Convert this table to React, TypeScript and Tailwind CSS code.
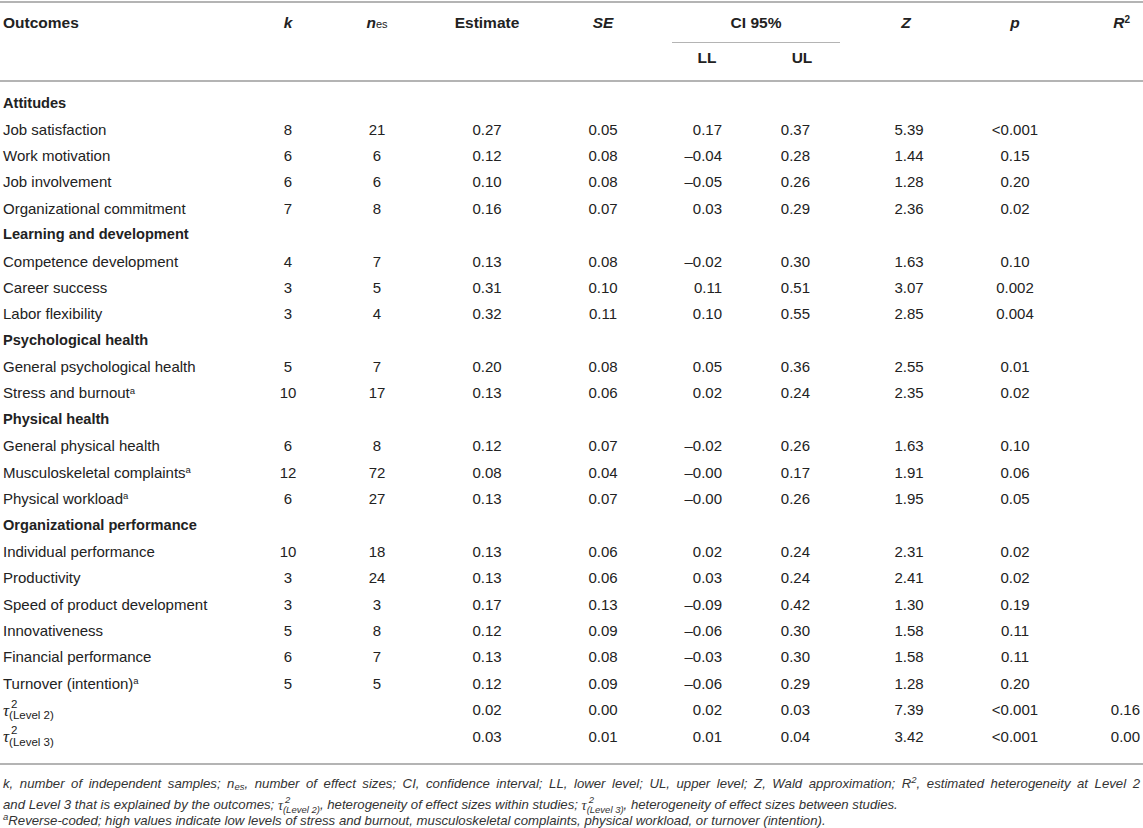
import React from "react";

type Row =
  | { kind: "group"; label: string }
  | { kind: "data"; label: string; sup?: boolean; v: string[] }
  | { kind: "tau"; level: string; v: string[] };

const rows: Row[] = [
  { kind: "group", label: "Attitudes" },
  { kind: "data", label: "Job satisfaction", v: ["8", "21", "0.27", "0.05", "0.17", "0.37", "5.39", "<0.001", ""] },
  { kind: "data", label: "Work motivation", v: ["6", "6", "0.12", "0.08", "–0.04", "0.28", "1.44", "0.15", ""] },
  { kind: "data", label: "Job involvement", v: ["6", "6", "0.10", "0.08", "–0.05", "0.26", "1.28", "0.20", ""] },
  { kind: "data", label: "Organizational commitment", v: ["7", "8", "0.16", "0.07", "0.03", "0.29", "2.36", "0.02", ""] },
  { kind: "group", label: "Learning and development" },
  { kind: "data", label: "Competence development", v: ["4", "7", "0.13", "0.08", "–0.02", "0.30", "1.63", "0.10", ""] },
  { kind: "data", label: "Career success", v: ["3", "5", "0.31", "0.10", "0.11", "0.51", "3.07", "0.002", ""] },
  { kind: "data", label: "Labor flexibility", v: ["3", "4", "0.32", "0.11", "0.10", "0.55", "2.85", "0.004", ""] },
  { kind: "group", label: "Psychological health" },
  { kind: "data", label: "General psychological health", v: ["5", "7", "0.20", "0.08", "0.05", "0.36", "2.55", "0.01", ""] },
  { kind: "data", label: "Stress and burnout", sup: true, v: ["10", "17", "0.13", "0.06", "0.02", "0.24", "2.35", "0.02", ""] },
  { kind: "group", label: "Physical health" },
  { kind: "data", label: "General physical health", v: ["6", "8", "0.12", "0.07", "–0.02", "0.26", "1.63", "0.10", ""] },
  { kind: "data", label: "Musculoskeletal complaints", sup: true, v: ["12", "72", "0.08", "0.04", "–0.00", "0.17", "1.91", "0.06", ""] },
  { kind: "data", label: "Physical workload", sup: true, v: ["6", "27", "0.13", "0.07", "–0.00", "0.26", "1.95", "0.05", ""] },
  { kind: "group", label: "Organizational performance" },
  { kind: "data", label: "Individual performance", v: ["10", "18", "0.13", "0.06", "0.02", "0.24", "2.31", "0.02", ""] },
  { kind: "data", label: "Productivity", v: ["3", "24", "0.13", "0.06", "0.03", "0.24", "2.41", "0.02", ""] },
  { kind: "data", label: "Speed of product development", v: ["3", "3", "0.17", "0.13", "–0.09", "0.42", "1.30", "0.19", ""] },
  { kind: "data", label: "Innovativeness", v: ["5", "8", "0.12", "0.09", "–0.06", "0.30", "1.58", "0.11", ""] },
  { kind: "data", label: "Financial performance", v: ["6", "7", "0.13", "0.08", "–0.03", "0.30", "1.58", "0.11", ""] },
  { kind: "data", label: "Turnover (intention)", sup: true, v: ["5", "5", "0.12", "0.09", "–0.06", "0.29", "1.28", "0.20", ""] },
  { kind: "tau", level: "(Level 2)", v: ["", "", "0.02", "0.00", "0.02", "0.03", "7.39", "<0.001", "0.16"] },
  { kind: "tau", level: "(Level 3)", v: ["", "", "0.03", "0.01", "0.01", "0.04", "3.42", "<0.001", "0.00"] },
];

// alignment for the 9 value columns
const cellCls = [
  "text-center",
  "text-center",
  "text-center",
  "text-center",
  "text-right pr-[32px]",
  "text-right pr-[40px]",
  "text-center pl-[6px]",
  "text-center",
  "text-right pr-[3px]",
];

const Tau = ({ level, small }: { level: string; small?: boolean }) => (
  <span className="inline-flex items-center align-middle">
    <span className={`italic font-['Liberation_Serif',serif] ${small ? "text-[14px]" : "text-[17px]"}`}>τ</span>
    <span
      className={`inline-flex flex-col leading-none ${small ? "text-[9.5px] italic -my-[5px] -translate-y-[1px]" : "text-[11.5px] not-italic"}`}
    >
      <span className="pl-[2px]">2</span>
      <span>{level}</span>
    </span>
  </span>
);

export default function App() {
  return (
    <div className="w-[1143px] pt-[1px] bg-white text-[#222] font-['Liberation_Sans',Arial,sans-serif] text-[15px]">
      <table className="w-[1143px] table-fixed border-collapse">
        <colgroup>
          <col className="w-[250px]" />
          <col className="w-[76px]" />
          <col className="w-[102px]" />
          <col className="w-[118px]" />
          <col className="w-[114px]" />
          <col className="w-[94px]" />
          <col className="w-[96px]" />
          <col className="w-[112px]" />
          <col className="w-[106px]" />
          <col className="w-[75px]" />
        </colgroup>
        <thead className="font-bold text-[15.5px]">
          <tr className="h-[40px] border-t-2 border-t-[#b4b4b4]">
            <th className="pl-[3px] text-left align-top pt-[8px]">Outcomes</th>
            <th className="align-top pt-[8px] italic">k</th>
            <th className="align-top pt-[8px]">
              <span className="italic">n</span>
              <span className="font-normal text-[11px]">es</span>
            </th>
            <th className="align-top pt-[8px]">Estimate</th>
            <th className="align-top pt-[8px] italic">SE</th>
            <th colSpan={2} className="align-top pt-[8px]">
              <div className="ml-[12px] mr-[10px] border-b border-[#b4b4b4] pb-[8px]">CI 95%</div>
            </th>
            <th className="align-top pt-[8px] italic">Z</th>
            <th className="align-top pt-[8px] italic">p</th>
            <th className="align-top pt-[8px] text-right pr-[13px]">
              <span className="italic">R</span>
              <sup className="text-[10px]">2</sup>
            </th>
          </tr>
          <tr className="h-[38px] border-b-2 border-b-[#b4b4b4]">
            <th colSpan={5}></th>
            <th className="text-center pb-[8px]">LL</th>
            <th className="text-center pb-[8px]">UL</th>
            <th colSpan={3}></th>
          </tr>
        </thead>
        <tbody>
          <tr className="h-[9px]">
            <td colSpan={10}></td>
          </tr>
          {rows.map((r, i) =>
            r.kind === "group" ? (
              <tr key={i} className="h-[26.4px]">
                <td colSpan={10} className="pl-[3px] font-bold text-[14.6px]">
                  {r.label}
                </td>
              </tr>
            ) : (
              <tr key={i} className="h-[26.4px]">
                <td className="pl-[3px] whitespace-nowrap">
                  {r.kind === "tau" ? (
                    <Tau level={r.level} />
                  ) : (
                    <>
                      {r.label}
                      {r.sup && <sup className="text-[9.5px]">a</sup>}
                    </>
                  )}
                </td>
                {r.v.map((val, j) => (
                  <td key={j} className={cellCls[j]}>
                    {val}
                  </td>
                ))}
              </tr>
            )
          )}
          <tr className="h-[14px] border-b-2 border-b-[#b4b4b4]">
            <td colSpan={10}></td>
          </tr>
        </tbody>
      </table>

      <div className="pt-[10px] pl-[3px] pr-[3px] italic text-[13.2px] text-[#333]">
        <div className="h-[17px] leading-[17px] text-justify [text-align-last:justify]">
          k, number of independent samples; n<sub className="text-[9.5px]">es</sub>, number of effect sizes; CI, confidence
          interval; LL, lower level; UL, upper level; Z, Wald approximation; R<sup className="text-[9.5px]">2</sup>,
          estimated heterogeneity at Level 2
        </div>
        <div className="h-[21px] pt-[4px] leading-[17px] whitespace-nowrap">
          and Level 3 that is explained by the outcomes; <Tau level="(Level 2)" small />, heterogeneity of effect sizes
          within studies; <Tau level="(Level 3)" small />, heterogeneity of effect sizes between studies.
        </div>
        <div className="h-[16px] leading-[16px] whitespace-nowrap">
          <sup className="text-[9.5px]">a</sup>Reverse-coded; high values indicate low levels of stress and burnout,
          musculoskeletal complaints, physical workload, or turnover (intention).
        </div>
      </div>
    </div>
  );
}
